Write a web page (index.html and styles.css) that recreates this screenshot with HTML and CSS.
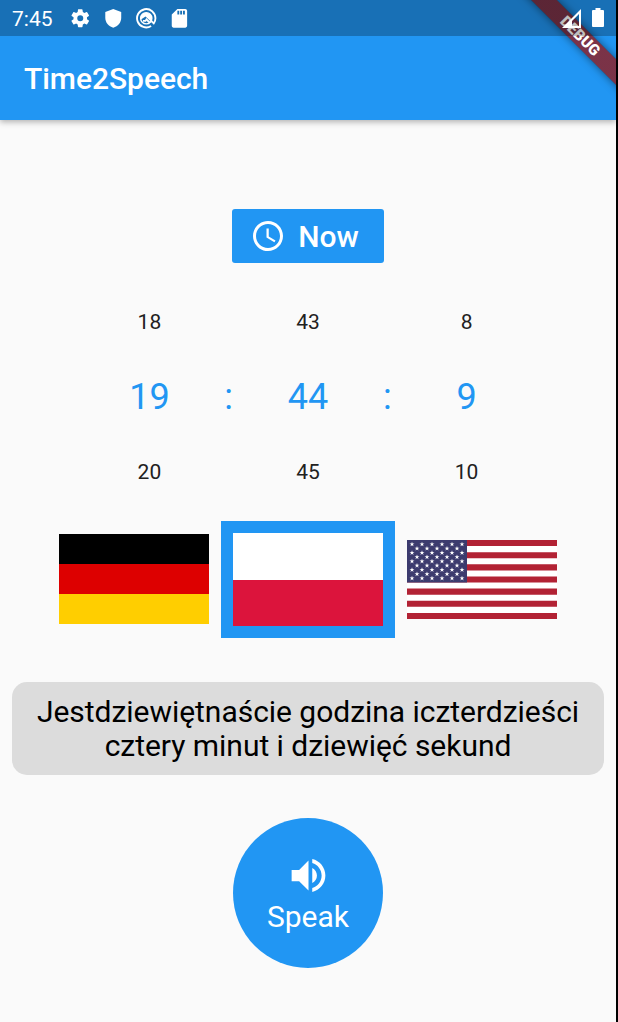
FILE: index.html
```html
<!DOCTYPE html>
<html lang="pl">
<head>
<meta charset="utf-8">
<title>Time2Speech</title>
<link rel="stylesheet" href="styles.css">
</head>
<body>
<div class="screen">
  <header class="app-bar">
    <h1 class="app-title">Time2Speech</h1>
  </header>
  <div class="ribbon-clip"><div class="ribbon">DEBUG</div></div>
  <div class="status-bar">
    <span class="clock">7:45</span>
    <svg class="status-icon" viewBox="0 0 24 24"><path d="M19.14 12.94c.04-.3.06-.61.06-.94 0-.32-.02-.64-.07-.94l2.03-1.58a.49.49 0 0 0 .12-.61l-1.92-3.32a.488.488 0 0 0-.59-.22l-2.39.96c-.5-.38-1.03-.7-1.62-.94l-.36-2.54a.484.484 0 0 0-.48-.41h-3.84c-.24 0-.43.17-.47.41l-.36 2.54c-.59.24-1.13.57-1.62.94l-2.39-.96c-.22-.08-.47 0-.59.22L2.74 8.87c-.12.21-.08.47.12.61l2.03 1.58c-.05.3-.09.63-.09.94s.02.64.07.94l-2.03 1.58a.49.49 0 0 0-.12.61l1.92 3.32c.12.22.37.29.59.22l2.39-.96c.5.38 1.03.7 1.62.94l.36 2.54c.05.24.24.41.48.41h3.84c.24 0 .44-.17.47-.41l.36-2.54c.59-.24 1.13-.56 1.62-.94l2.39.96c.22.08.47 0 .59-.22l1.92-3.32c.12-.22.07-.47-.12-.61l-2.01-1.58zM12 15.2A3.2 3.2 0 1 1 12 8.8a3.2 3.2 0 0 1 0 6.400z"/></svg>
    <svg class="status-icon" viewBox="0 0 24 24"><path d="M12 2 3.500 5.200v6.300C3.500 16.500 7 20.800 12 22c5-1.200 8.500-5.500 8.500-10.500V5.200z"/></svg>
    <svg class="status-icon" viewBox="0 0 24 24"><path class="line" d="M17.200 20.300A9.800 9.800 0 1 1 21.800 12Q21.800 15.200 20 17.500L17 14.500"/><circle class="line inner" cx="12" cy="12" r="6"/><path d="M6 13.500A6 6 0 0 1 18 11v5.500L11.200 10z"/><path class="line" d="M11.500 12.500 16 17M8.500 14.800H12"/></svg>
    <svg class="status-icon" viewBox="0 0 24 24"><path d="M18.400 2H10L4 8v12c0 1.100.9 2 2 2h12.400c1.100 0 2-.9 2-2V4c0-1.100-.9-2-2-2zM12 8h-2V4h2zm3 0h-2V4h2zm3 0h-2V4h2z"/></svg>
    <span class="spacer"></span>
    <svg class="signal" viewBox="0 0 19 19"><path d="M0 19 19 0v19zM10 17h7V5l-7 7z" fill-rule="evenodd"/></svg>
    <svg class="battery" viewBox="0 0 12 19"><path d="M3.500 0h5v2H11q1 0 1 1v15q0 1-1 1H1q-1 0-1-1V3q0-1 1-1h2.500z"/></svg>
  </div>

  <main class="content">
    <button class="now">
      <svg class="now-icon" viewBox="0 0 24 24"><path d="M11.990 2C6.470 2 2 6.480 2 12s4.470 10 9.990 10C17.520 22 22 17.520 22 12S17.520 2 11.990 2zM12 20c-4.420 0-8-3.580-8-8s3.580-8 8-8 8 3.580 8 8-3.580 8-8 8zm.5-13H11v6l5.250 3.150.75-1.230-4.500-2.670z"/></svg>
      <span>Now</span>
    </button>

    <div class="picker">
      <span>18</span><span></span><span>43</span><span></span><span>8</span>
      <span class="current">19</span><span class="current">:</span><span class="current">44</span><span class="current">:</span><span class="current">9</span>
      <span>20</span><span></span><span>45</span><span></span><span>10</span>
    </div>

    <div class="flags">
      <div class="flag">
        <svg class="flag-de" viewBox="0 0 5 3" preserveAspectRatio="none"><path d="M0 0h5v3H0z"/><path fill="#d00" d="M0 1h5v2H0z"/><path fill="#ffce00" d="M0 2h5v1H0z"/></svg>
      </div>
      <div class="flag selected">
        <svg class="flag-pl" viewBox="0 0 8 5" preserveAspectRatio="none"><path fill="#fff" d="M0 0h8v5H0z"/><path fill="#dc143c" d="M0 2.500h8V5H0z"/></svg>
      </div>
      <div class="flag">
        <svg class="flag-us" viewBox="0 0 247 130" preserveAspectRatio="none">
          <defs>
            <path id="star" d="M0-4.300 1-1.330H4.100L1.560.5 2.530 3.480 0 1.640-2.530 3.480-1.560.5-4.100-1.330H-1z"/>
            <g id="five"><use href="#star" x="16.470"/><use href="#star" x="32.930"/><use href="#star" x="49.400"/><use href="#star" x="65.870"/><use href="#star" x="82.330"/></g>
            <g id="six"><use href="#five" x="-8.230"/><use href="#star" x="90.570"/></g>
          </defs>
          <path fill="#fff" d="M0 0h247v130H0z"/>
          <path fill="#b22234" d="M0 0h247v10H0zM0 20h247v10H0zM0 40h247v10H0zM0 60h247v10H0zM0 80h247v10H0zM0 100h247v10H0zM0 120h247v10H0z"/>
          <path fill="#3c3b6e" d="M0 0h98.800v70H0z"/>
          <g fill="#fff"><use href="#six" y="7"/><use href="#five" y="14"/><use href="#six" y="21"/><use href="#five" y="28"/><use href="#six" y="35"/><use href="#five" y="42"/><use href="#six" y="49"/><use href="#five" y="56"/><use href="#six" y="63"/></g>
        </svg>
      </div>
    </div>

    <p class="message">Jestdziewiętnaście godzina iczterdzieści cztery minut i dziewięć sekund</p>

    <button class="speak">
      <svg class="speak-icon" viewBox="0 0 24 24"><path d="M3 9v6h4l5 5V4L7 9zm13.500 3c0-1.770-1.020-3.290-2.500-4.030v8.050c1.480-.73 2.500-2.250 2.500-4.020zM14 3.230v2.060c2.890.86 5 3.540 5 6.710s-2.110 5.850-5 6.710v2.060c4.010-.91 7-4.490 7-8.770s-2.990-7.860-7-8.770z"/></svg>
      <span>Speak</span>
    </button>
  </main>
</div>
</body>
</html>
```

FILE: styles.css
```css
* { box-sizing: border-box; }

body {
  margin: 0;
  background: #000;
  font-family: Roboto, sans-serif;
}

svg { display: block; flex: none; }

.screen {
  position: relative;
  width: 616px;
  height: 1022px;
  overflow: hidden;
  background: #fafafa;
}

.app-bar {
  position: relative;
  height: 120px;
  padding: 36px 24px 0;
  display: flex;
  align-items: center;
  background: #2196f3;
  box-shadow: 0 2px 6px rgba(0, 0, 0, .3);
}

.app-title {
  margin: 0;
  font-size: 30px;
  font-weight: 500;
  line-height: 35px;
  letter-spacing: -.04px;
  color: #fff;
}

/* Debug ribbon across the top right corner */
.ribbon-clip {
  position: absolute;
  top: 0;
  right: 0;
  width: 120px;
  height: 120px;
  overflow: hidden;
}

.ribbon {
  position: absolute;
  left: 4px;
  top: 27px;
  width: 160px;
  height: 18px;
  transform: rotate(45deg);
  background:
    linear-gradient(rgba(183, 28, 28, .63), rgba(183, 28, 28, .63)),
    rgba(0, 0, 0, .4);
  box-shadow: 0 0 9px rgba(0, 0, 0, .5);
  color: #fff;
  font-size: 15.300px;
  font-weight: 900;
  line-height: 18px;
  text-align: center;
}

/* System status bar lies over the app */
.status-bar {
  position: absolute;
  inset: 0 0 auto;
  height: 36px;
  padding: 0 12px;
  display: flex;
  align-items: center;
  background: rgba(0, 0, 0, .25);
  color: #fff;
  fill: #fff;
}

.clock { width: 56.500px; font-size: 21px; line-height: 36px; padding-top: 2px; }
.status-icon { width: 22.500px; height: 22.500px; margin-right: 10.500px; }
.line { fill: none; stroke: #fff; stroke-width: 2; }
.inner { stroke-width: 1.500; }
.spacer { flex: 1; }
.signal { width: 19px; height: 19px; margin-right: 11px; }
.battery { width: 12px; height: 19px; margin-bottom: 1px; }

.content {
  display: flex;
  flex-direction: column;
  align-items: center;
  padding: 89px 12px 0;
}

button { border: 0; font: inherit; color: #fff; fill: #fff; background: #2196f3; }

.now {
  width: 151.500px;
  height: 54px;
  padding: 0 0 0 18px;
  display: flex;
  align-items: center;
  gap: 12px;
  border-radius: 3px;
  font-size: 30px;
  font-weight: 500;
}

.now-icon { width: 36px; height: 36px; }

.picker {
  margin-top: 21px;
  display: grid;
  grid-template-columns: repeat(5, 79.300px);
  grid-auto-rows: 75px;
  place-items: center;
  font-size: 21px;
  color: #212121;
}

.current { font-size: 36px; color: #2196f3; }

.flags { margin-top: 11.600px; display: flex; align-items: center; }
.flag { padding: 12px; }
.selected { background: #2196f3; }
.flag svg { width: 150px; }
.flag .flag-de { height: 90px; }
.flag .flag-pl { height: 93.750px; }
.flag .flag-us { height: 79px; }

.message {
  width: 592px;
  margin: 43.650px 0 0;
  padding: 13px 12px 12px;
  border-radius: 15px;
  background: #dcdcdc;
  color: #000;
  font-size: 30px;
  line-height: 34px;
  letter-spacing: -.03px;
  text-align: center;
}

.speak {
  width: 150px;
  height: 150px;
  margin-top: 43px;
  padding: 4px 0 0;
  display: flex;
  flex-direction: column;
  align-items: center;
  justify-content: center;
  border-radius: 50%;
  font-size: 30px;
  line-height: 38px;
}

.speak-icon { width: 45px; height: 45px; }
```
